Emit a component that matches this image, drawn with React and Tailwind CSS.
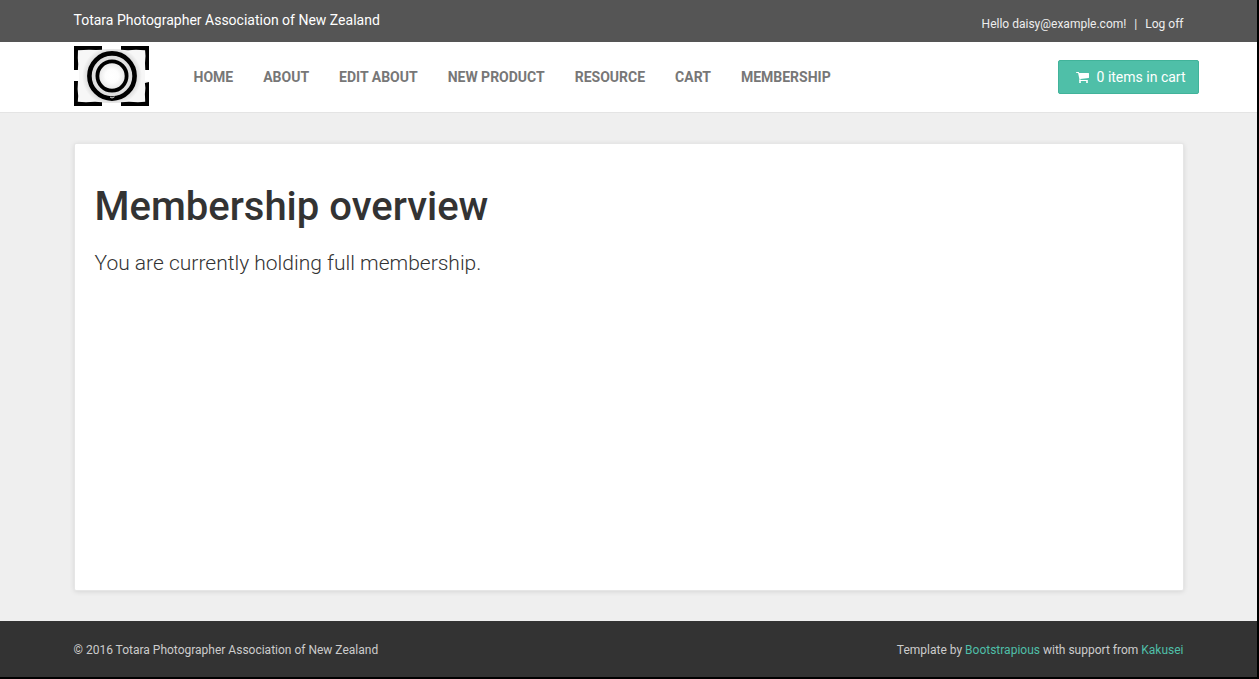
const navItems = ["Home", "About", "Edit About", "New Product", "Resource", "Cart", "Membership"];

function Logo() {
  return (
    <svg viewBox="0 0 76 60" className="block h-[60px] w-[76px]" role="img" aria-label="Home">
      <defs>
        <radialGradient id="lens-shade" cx="50%" cy="50%" r="50%">
          <stop offset="0%" stopColor="#fff" />
          <stop offset="22%" stopColor="#fdfdfd" />
          <stop offset="48%" stopColor="#e4e4e4" />
          <stop offset="80%" stopColor="#d9d9d9" />
          <stop offset="100%" stopColor="#f7f7f7" />
        </radialGradient>
      </defs>
      <rect x="1" y="1" width="74" height="58" fill="#f7f7f7" />
      <circle cx="38" cy="30" r="30" fill="url(#lens-shade)" />
      <g fill="#fff">
        <rect x="28" y="0" width="19" height="3" />
        <rect x="28" y="57" width="19" height="3" />
        <rect x="0" y="24" width="5" height="11" />
        <rect x="71" y="24" width="5" height="11" />
      </g>
      <g fill="#000">
        <path d="M0 0H28V3.8L22 4.1L15 3.7L4 4.2L3.8 12L4.2 18L3.9 24H0Z" />
        <path d="M47 0H75V24H71.3L71 17L71.5 10L71.1 4.2L62 3.7L54 4.2L47 3.8Z" />
        <path d="M0 35H4L3.6 43L4.2 50L3.8 55.8L12 56.2L21 55.8L28 56.3V60H0Z" />
        <path d="M75 36V60H47V56.2L55 55.8L64 56.3L71.2 55.8L70.9 48L71.4 42L70.9 37Z" />
      </g>
      <circle cx="38" cy="30" r="22.6" fill="none" stroke="#000" strokeWidth="4.6" />
      <circle cx="38" cy="30" r="14.6" fill="none" stroke="#000" strokeWidth="3.8" />
      <path d="M36 51L38 52L40.500 50.800" fill="none" stroke="#ddd" strokeWidth="1" />
    </svg>
  );
}

function CartIcon() {
  return (
    <svg viewBox="0 128 1664 1536" className="h-3 w-[13px] fill-current" aria-hidden="true">
      <path d="M640 1536q0 52-38 90t-90 38-90-38-38-90 38-90 90-38 90 38 38 90zm896 0q0 52-38 90t-90 38-90-38-38-90 38-90 90-38 90 38 38 90zm128-1088v512q0 24-16.5 42.5t-40.5 21.5l-1044 122q13 60 13 70 0 16-24 64h920q26 0 45 19t19 45-19 45-45 19h-1024q-26 0-45-19t-19-45q0-11 8-31.5t16-36 21.5-40 15.5-29.5l-177-823h-204q-26 0-45-19t-19-45 19-45 45-19h256q16 0 28.5 6.5t19.5 15.5 13 24.5 8 26 5.5 29.5 4.500 26h1201q26 0 45 19t19 45z" />
    </svg>
  );
}

function Container({ className, children }) {
  return <div className={`mx-auto w-full max-w-[1140px] px-[15px] ${className}`}>{children}</div>;
}

export default function App() {
  return (
    <div className="flex min-h-screen flex-col border-r-2 border-b-2 border-black bg-[#efefef] font-[Roboto,sans-serif] text-[#333]">
      <div className="bg-[#555] text-white">
        <Container className="flex flex-wrap justify-between pt-[10px] pb-2">
          <p className="text-sm leading-5">Totara Photographer Association of New Zealand</p>
          <div className="flex gap-2 pt-1 text-xs leading-5 text-[#eee]">
            <a href="#account">Hello daisy@example.com!</a>
            <span>|</span>
            <a href="#logoff">Log off</a>
          </div>
        </Container>
      </div>

      <header className="border-b border-[#e4e4e4] bg-white">
        <Container className="flex min-h-[70px] flex-wrap items-center">
          <a href="#home" className="mb-0.5">
            <Logo />
          </a>
          <nav className="ml-11 flex flex-wrap gap-[30px] text-sm leading-5 font-bold text-[#777] uppercase">
            {navItems.map((item) => (
              <a key={item} href={`#${item.toLowerCase().replace(" ", "-")}`}>
                {item}
              </a>
            ))}
          </nav>
          <a
            href="#basket"
            className="-mr-[15px] ml-auto flex items-center gap-2 rounded-xs border border-[#41b39a] bg-[#4fbfa8] py-[6px] pr-3 pl-[17px] text-sm leading-5 text-white"
          >
            <CartIcon />
            0 items in cart
          </a>
        </Container>
      </header>

      <main className="flex grow py-[30px]">
        <Container className="flex">
          <section className="grow rounded-xs border border-[#e6e6e6] bg-white px-5 pt-[41px] pb-5 shadow-[0_1px_5px_rgba(0,0,0,0.1)]">
            <h1 className="text-[40px] leading-[44px] font-medium">Membership overview</h1>
            <p className="mt-[19px] text-[21px] leading-[30px] font-light">
              You are currently holding full membership.
            </p>
          </section>
        </Container>
      </main>

      <footer className="bg-[#333] text-xs leading-4 text-[#ccc]">
        <Container className="flex flex-wrap justify-between gap-4 pt-[21px] pb-[19px]">
          <p>© 2016 Totara Photographer Association of New Zealand</p>
          <p>
            Template by{" "}
            <a href="#bootstrapious" className="text-[#4fbfa8]">
              Bootstrapious
            </a>{" "}
            with support from{" "}
            <a href="#kakusei" className="text-[#4fbfa8]">
              Kakusei
            </a>
          </p>
        </Container>
      </footer>
    </div>
  );
}
